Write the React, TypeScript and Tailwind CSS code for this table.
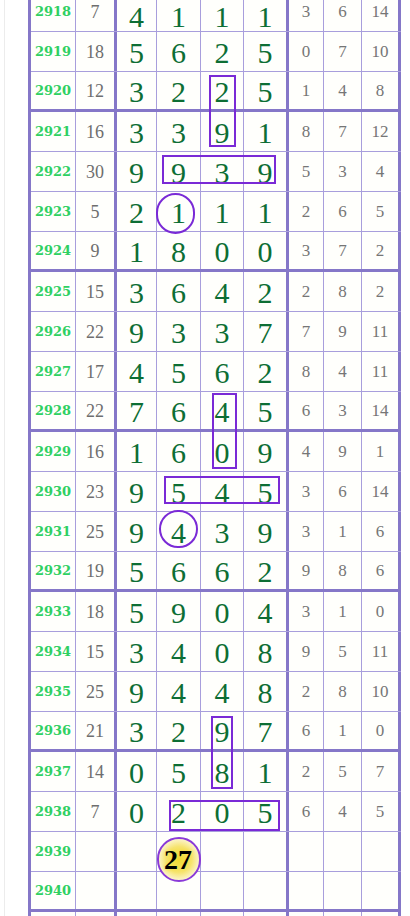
import React from "react";

type Row = {
  no: number;
  sum?: number;
  digits: number[];
  tail: number[];
};

const raw: [number, number, string, string][] = [
  [2918, 7, "4111", "3,6,14"],
  [2919, 18, "5625", "0,7,10"],
  [2920, 12, "3225", "1,4,8"],
  [2921, 16, "3391", "8,7,12"],
  [2922, 30, "9939", "5,3,4"],
  [2923, 5, "2111", "2,6,5"],
  [2924, 9, "1800", "3,7,2"],
  [2925, 15, "3642", "2,8,2"],
  [2926, 22, "9337", "7,9,11"],
  [2927, 17, "4562", "8,4,11"],
  [2928, 22, "7645", "6,3,14"],
  [2929, 16, "1609", "4,9,1"],
  [2930, 23, "9545", "3,6,14"],
  [2931, 25, "9439", "3,1,6"],
  [2932, 19, "5662", "9,8,6"],
  [2933, 18, "5904", "3,1,0"],
  [2934, 15, "3408", "9,5,11"],
  [2935, 25, "9448", "2,8,10"],
  [2936, 21, "3297", "6,1,0"],
  [2937, 14, "0581", "2,5,7"],
  [2938, 7, "0205", "6,4,5"],
];

const rows: Row[] = [
  ...raw.map(([no, sum, d, t]) => ({
    no,
    sum,
    digits: d.split("").map(Number),
    tail: t.split(",").map(Number),
  })),
  { no: 2939, digits: [], tail: [] },
  { no: 2940, digits: [], tail: [] },
];

// widths of the 9 columns (borders included)
const thin = "border-r border-[#a89edc]";
const thick = "border-r-[3px] border-[#8577c8]";
const cols = [
  `w-[45px] ${thin}`,
  `w-[41px] ${thick}`,
  `w-[40px] ${thin}`,
  `w-[44px] ${thin}`,
  `w-[43px] ${thin}`,
  `w-[45px] ${thick}`,
  `w-[35px] ${thin}`,
  `w-[38px] ${thin}`,
  `w-[39px] ${thick}`,
];

function TableRow({ row, first }: { row: Row; first: boolean }) {
  const groupEnd = (row.no - 2920) % 4 === 0;
  return (
    <div
      className={`flex h-[40px] ${
        groupEnd
          ? "border-b-[3px] border-[#8577c8]"
          : "border-b border-[#a89edc]"
      }`}
    >
      <div
        className={`${cols[0]} flex items-center justify-center font-['DejaVu_Serif',serif] text-[13px] leading-none font-bold text-[#2fd062]`}
      >
        {row.no}
      </div>
      <div
        className={`${cols[1]} flex items-center justify-center text-[18px] leading-none text-[#6e6e6e]`}
      >
        {row.sum ?? ""}
      </div>
      {[0, 1, 2, 3].map((i) => (
        <div
          key={i}
          className={`${cols[i + 2]} flex items-center justify-center ${
            first ? "pt-[10px]" : "pt-[2px]"
          } text-[30px] leading-[22px] text-[#0d6e34]`}
        >
          {row.digits[i] ?? ""}
        </div>
      ))}
      {[0, 1, 2].map((i) => (
        <div
          key={i}
          className={`${cols[i + 6]} flex items-center justify-center text-[17px] leading-none text-[#767676]`}
        >
          {row.tail[i] ?? ""}
        </div>
      ))}
    </div>
  );
}

const boxes = [
  "left-[209px] top-[75px] w-[27px] h-[72px]",
  "left-[162px] top-[155px] w-[114px] h-[29px]",
  "left-[212px] top-[393px] w-[25px] h-[76px]",
  "left-[164px] top-[476px] w-[116px] h-[28px]",
  "left-[211px] top-[716px] w-[22px] h-[73px]",
  "left-[169px] top-[800px] w-[111px] h-[31px]",
];

const rings = [
  "left-[156px] top-[193px] w-[39px] h-[41px]",
  "left-[159px] top-[510px] w-[39px] h-[38px]",
];

export default function App() {
  return (
    <div className="relative w-[410px] h-[916px] overflow-hidden bg-white font-['Liberation_Serif',serif]">
      <div className="flex h-full">
        <div className="w-[5px] shrink-0 border-r border-[#ececec]" />
        <div className="w-[23px] shrink-0" />
        <div className="-mt-[8px] shrink-0 border-l-[3px] border-[#8577c8] bg-[#fffffc]">
          {rows.map((r, i) => (
            <TableRow key={r.no} row={r} first={i === 0} />
          ))}
          <div className="flex h-[40px]">
            {cols.map((c, i) => (
              <div key={i} className={c} />
            ))}
          </div>
        </div>
      </div>

      {boxes.map((b, i) => (
        <div
          key={i}
          className={`absolute ${b} border-2 border-[#7a2ad6]`}
        />
      ))}
      {rings.map((r, i) => (
        <div
          key={i}
          className={`absolute ${r} rounded-full border-2 border-[#7a2ad6]`}
        />
      ))}

      <div className="absolute left-[157px] top-[837px] w-[44px] h-[45px] rounded-full border-2 border-[#8a3ad8] bg-[radial-gradient(circle,#f2d930_0%,#f6e470_45%,#fbf3c4_70%,#fffbe8_100%)] flex items-center justify-center">
        <span className="text-[28px] font-bold leading-none text-black -ml-[2px] [text-shadow:0_0_4px_#f5dc3a]">
          27
        </span>
      </div>
    </div>
  );
}
